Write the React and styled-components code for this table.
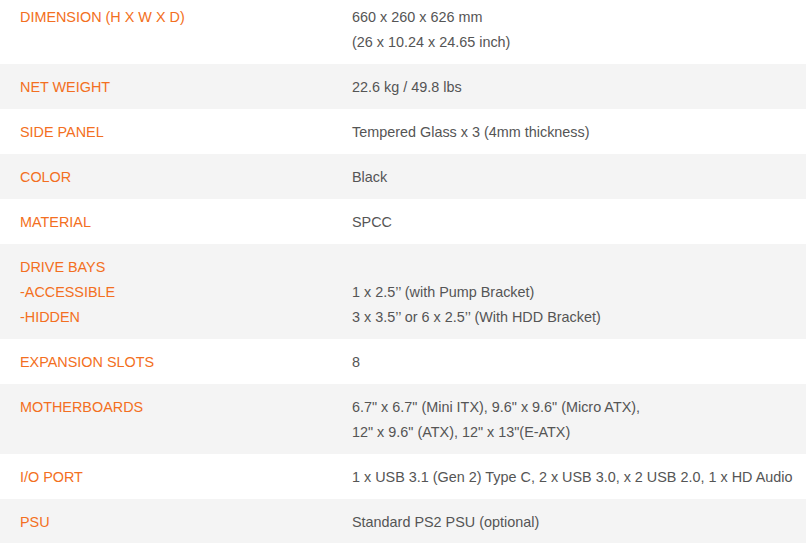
import React from 'react';
import styled, { createGlobalStyle } from 'styled-components';

const GlobalStyle = createGlobalStyle`
	html, body {
		margin: 0;
		padding: 0;
		background: #ffffff;
		overflow: hidden;
	}
`;

const specs = [
	{ label: ['DIMENSION (H X W X D)'], value: ['660 x 260 x 626 mm', '(26 x 10.24 x 24.65 inch)'] },
	{ label: ['NET WEIGHT'], value: ['22.6 kg / 49.8 lbs'] },
	{ label: ['SIDE PANEL'], value: ['Tempered Glass x 3 (4mm thickness)'] },
	{ label: ['COLOR'], value: ['Black'] },
	{ label: ['MATERIAL'], value: ['SPCC'] },
	{
		label: ['DRIVE BAYS', '-ACCESSIBLE', '-HIDDEN'],
		value: ['\u00a0', '1 x 2.5\u2019\u2019 (with Pump Bracket)', '3 x 3.5\u2019\u2019 or 6 x 2.5\u2019\u2019 (With HDD Bracket)'],
	},
	{ label: ['EXPANSION SLOTS'], value: ['8'] },
	{
		label: ['MOTHERBOARDS'],
		value: ['6.7" x 6.7" (Mini ITX), 9.6" x 9.6" (Micro ATX),', '12" x 9.6" (ATX), 12" x 13"(E-ATX)'],
	},
	{ label: ['I/O PORT'], value: ['1 x USB 3.1 (Gen 2) Type C, 2 x USB 3.0, x 2 USB 2.0, 1 x HD Audio'] },
	{ label: ['PSU'], value: ['Standard PS2 PSU (optional)'] },
];

const SpecTable = () => (
	<Table>
		{specs.map((row, i) => (
			<Row key={row.label[0]} striped={i % 2 === 1}>
				<Label>
					{row.label.map((line) => (
						<Line key={line}>{line}</Line>
					))}
				</Label>
				<Value>
					{row.value.map((line, j) => (
						<Line key={j}>{line}</Line>
					))}
				</Value>
			</Row>
		))}
	</Table>
);

const App = () => (
	<>
		<GlobalStyle />
		<SpecTable />
	</>
);

const Table = styled.div`
	display: flex;
	flex-direction: column;
	width: 806px;
	margin-top: -6px;
	font-family: 'Liberation Sans', Arial, sans-serif;
	font-size: 14.4px;
	line-height: 25px;
`;

const Row = styled.div`
	display: grid;
	grid-template-columns: 332px 1fr;
	background-color: ${(props) => (props.striped ? '#f4f4f4' : '#ffffff')};
`;

const Label = styled.div`
	padding: 10px 20px;
	color: #f36f21;
`;

const Value = styled.div`
	padding: 10px 0 10px 20px;
	color: #555555;
	white-space: nowrap;
`;

const Line = styled.div`
	padding-top: 1px;
	height: 24px;
`;

export default App;
